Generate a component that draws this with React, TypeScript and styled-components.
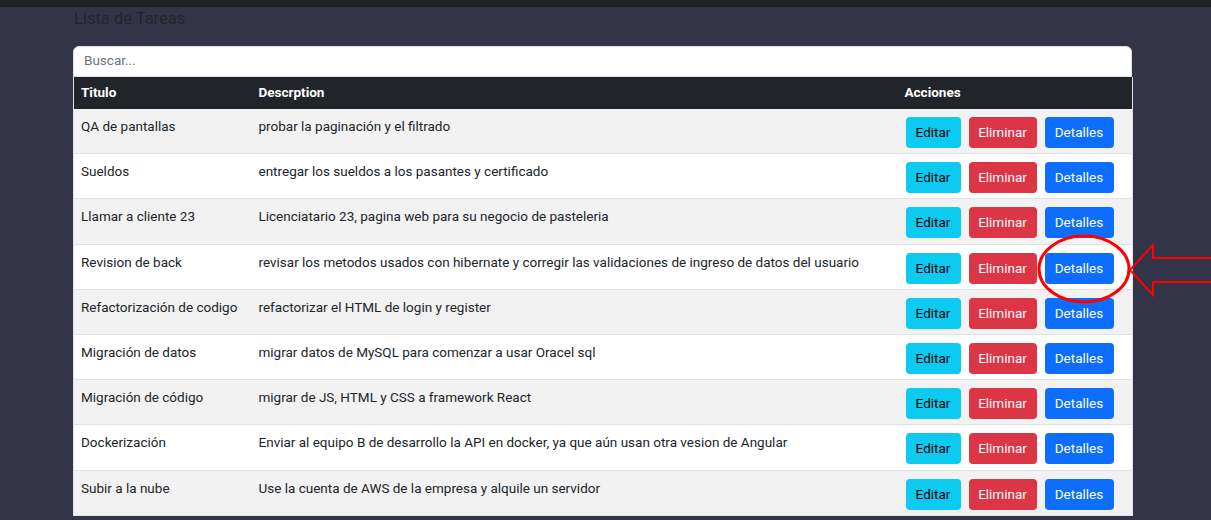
import React from "react";
import styled, { createGlobalStyle } from "styled-components";

const Global = createGlobalStyle`
  html, body { margin: 0; padding: 0; }
  body {
    background: #343449;
    font-family: Roboto, "Liberation Sans", Arial, sans-serif;
    color: #212529;
    overflow: hidden;
  }
`;

const TopBar = styled.div`
  height: 7px;
  background: #202127;
`;

const Page = styled.div`
  position: relative;
  padding: 0 79px 0 73px;
`;

const Title = styled.h2`
  margin: 0;
  padding: 2px 0 0 1px;
  height: 37px;
  font-size: 16.5px;
  font-weight: 400;
  line-height: 20px;
  color: #24252e;
`;

const Search = styled.input`
  display: block;
  box-sizing: border-box;
  width: 100%;
  height: 31px;
  margin: 0;
  padding: 2px 10px 6px;
  border: 1px solid #dee2e6;
  border-radius: 6px 6px 0 0;
  font-family: inherit;
  font-size: 13.5px;
  color: #212529;
  background: #fff;
  outline: none;
  &::placeholder { color: #6c757d; }
`;

const Table = styled.table`
  width: 100%;
  border-collapse: collapse;
  table-layout: fixed;
  font-size: 13.5px;
  background: #fff;
  border-left: 1px solid #dee2e6;
  border-right: 1px solid #dee2e6;
`;

const Th = styled.th<{ $w: number }>`
  box-sizing: border-box;
  width: ${(p) => p.$w}px;
  background: #212529;
  color: #fff;
  text-align: left;
  font-weight: 700;
  padding: 5px 7px 7px;
  line-height: 20px;
`;

const Tr = styled.tr<{ $odd: boolean }>`
  background: ${(p) => (p.$odd ? "#f2f2f2" : "#fff")};
  border-bottom: 1px solid #dee2e6;
`;

const Td = styled.td`
  padding: 7px 7px 5.2px;
  line-height: 20px;
  vertical-align: top;
  white-space: nowrap;
`;

const Actions = styled.div`
  display: flex;
  gap: 8px;
  margin: 1px 0 0 1px;
`;

const Btn = styled.button<{ $bg: string; $fg: string; $w: number }>`
  box-sizing: border-box;
  width: ${(p) => p.$w}px;
  height: 31px;
  border: none;
  border-radius: 4px;
  background: ${(p) => p.$bg};
  color: ${(p) => p.$fg};
  font-family: inherit;
  font-size: 13.5px;
  padding: 0;
  line-height: 31px;
  cursor: pointer;
`;

const Overlay = styled.svg`
  position: absolute;
  left: 0;
  top: 0;
  pointer-events: none;
`;

const rows: [string, string][] = [
  ["QA de pantallas", "probar la paginación y el filtrado"],
  ["Sueldos", "entregar los sueldos a los pasantes y certificado"],
  ["Llamar a cliente 23", "Licenciatario 23, pagina web para su negocio de pasteleria"],
  ["Revision de back", "revisar los metodos usados con hibernate y corregir las validaciones de ingreso de datos del usuario"],
  ["Refactorización de codigo", "refactorizar el HTML de login y register"],
  ["Migración de datos", "migrar datos de MySQL para comenzar a usar Oracel sql"],
  ["Migración de código", "migrar de JS, HTML y CSS a framework React"],
  ["Dockerización", "Enviar al equipo B de desarrollo la API en docker, ya que aún usan otra vesion de Angular"],
  ["Subir a la nube", "Use la cuenta de AWS de la empresa y alquile un servidor"],
];

export default function App() {
  return (
    <>
      <Global />
      <TopBar />
      <Page>
        <Title>Lista de Tareas</Title>
        <Search placeholder="Buscar..." />
        <Table>
          <thead>
            <tr>
              <Th $w={178}>Titulo</Th>
              <Th $w={646}>Descrption</Th>
              <Th $w={235}>Acciones</Th>
            </tr>
          </thead>
          <tbody>
            {rows.map(([t, d], i) => (
              <Tr key={i} $odd={i % 2 === 0}>
                <Td>{t}</Td>
                <Td>{d}</Td>
                <Td>
                  <Actions>
                    <Btn $bg="#0dcaf0" $fg="#000" $w={55}>Editar</Btn>
                    <Btn $bg="#dc3545" $fg="#fff" $w={68}>Eliminar</Btn>
                    <Btn $bg="#0d6efd" $fg="#fff" $w={69}>Detalles</Btn>
                  </Actions>
                </Td>
              </Tr>
            ))}
          </tbody>
        </Table>
      </Page>
      <Overlay width="1211" height="520" viewBox="0 0 1211 520">
        <ellipse cx="1084" cy="269" rx="45" ry="33" fill="none" stroke="#ff0000" strokeWidth="3" />
        <polygon
          points="1213,258 1153,258 1153,245 1130,270 1153,295 1153,282 1213,282"
          fill="none"
          stroke="#ff0000"
          strokeWidth="2"
        />
      </Overlay>
    </>
  );
}
